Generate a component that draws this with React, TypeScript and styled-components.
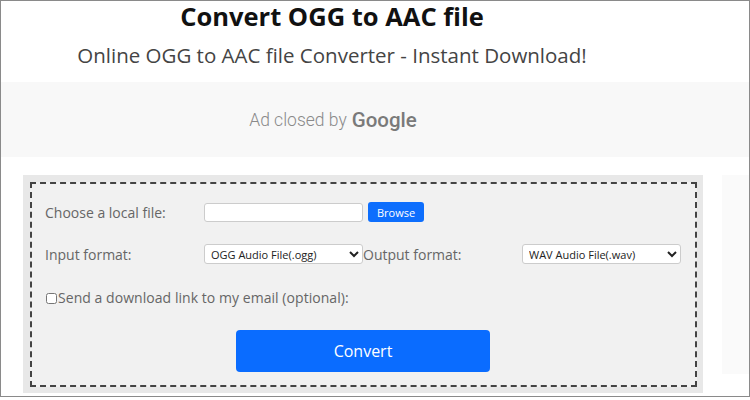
import React from "react";
import styled, { createGlobalStyle } from "styled-components";

const Global = createGlobalStyle`
  html, body { margin: 0; padding: 0; background: #fff; }
  body { font-family: "Open Sans", "Liberation Sans", sans-serif; }
`;

const Frame = styled.div`
  width: 750px;
  height: 397px;
  box-sizing: border-box;
  border: 1px solid #8a8a8a;
  overflow: hidden;
  display: flex;
  flex-direction: column;
`;

const Header = styled.header`
  display: flex;
  flex-direction: column;
  align-items: center;
  padding-right: 86px;
  height: 81px;
`;

const Title = styled.h1`
  margin: 0;
  font-size: 25.5px;
  font-weight: 700;
  color: #111;
  line-height: 31px;
`;

const Subtitle = styled.h2`
  margin: 9px 0 0;
  font-size: 20.5px;
  font-weight: 400;
  color: #444;
  line-height: 28px;
`;

const AdBox = styled.div`
  height: 75px;
  background: #f8f8f8;
  display: flex;
  align-items: center;
  justify-content: center;
  padding-right: 84px;
  font-family: Roboto, "Liberation Sans", sans-serif;
  font-weight: 300;
  color: #8a8a8a;
  font-size: 17.5px;
  gap: 5px;
`;

const GoogleWord = styled.span`
  font-size: 20.5px;
  font-weight: 500;
  color: #7a7a7a;
`;

const Lower = styled.div`
  display: flex;
  padding: 18px 0 0 22px;
  gap: 19px;
`;

const FormOuter = styled.div`
  width: 680px;
  height: 218px;
  box-sizing: border-box;
  background: #e8e8e8;
  padding: 7px 6px 6px 7px;
`;

const Dashed = styled.form`
  height: 100%;
  box-sizing: border-box;
  border: 2px dashed #444;
  background: #f1f1f1;
  padding: 18px 14px 0 13px;
  display: flex;
  flex-direction: column;
`;

const Grid = styled.div`
  display: grid;
  grid-template-columns: repeat(4, 159px);
  grid-auto-rows: 20px;
  row-gap: 22px;
  align-items: center;
`;

const Label = styled.label`
  font-size: 14px;
  color: #666;
  white-space: nowrap;
`;

const FileCell = styled.div`
  grid-column: span 3;
  display: flex;
  align-items: center;
  gap: 5px;
`;

const TextInput = styled.input`
  width: 159px;
  height: 19px;
  box-sizing: border-box;
  border: 1px solid #ccc;
  border-radius: 3px;
  background: #fff;
  padding: 0 4px;
`;

const SmallButton = styled.button`
  height: 20px;
  width: 56px;
  border: none;
  border-radius: 3px;
  background: #0d6efd;
  color: #fff;
  font-family: "Open Sans", sans-serif;
  font-size: 11px;
  padding: 0;
`;

const Select = styled.select`
  width: 159px;
  height: 20px;
  box-sizing: border-box;
  border: 1px solid #ccc;
  border-radius: 3px;
  background: #fff;
  color: #222;
  font-family: "Open Sans", sans-serif;
  font-size: 11px;
  padding: 0 0 0 2px;
`;

const CheckRow = styled.div`
  display: flex;
  align-items: center;
  margin-top: 24px;
  padding-left: 1px;
`;

const Check = styled.input`
  width: 11px;
  height: 11px;
  margin: 1px 1px 0 0;
`;

const CheckLabel = styled.label`
  font-size: 14px;
  color: #666;
  letter-spacing: 0.05px;
`;

const ConvertRow = styled.div`
  display: flex;
  justify-content: center;
  margin-top: 23px;
`;

const ConvertButton = styled.button`
  width: 254px;
  height: 42px;
  border: none;
  border-radius: 4px;
  background: #0a6cff;
  color: #fff;
  font-family: "Open Sans", sans-serif;
  font-size: 16px;
`;

const SidePanel = styled.div`
  width: 27px;
  height: 199px;
  background: #fafafa;
`;

export default function App() {
  return (
    <>
      <Global />
      <Frame>
        <Header>
          <Title>Convert OGG to AAC file</Title>
          <Subtitle>Online OGG to AAC file Converter - Instant Download!</Subtitle>
        </Header>
        <AdBox>
          <span>Ad closed by</span>
          <GoogleWord>Google</GoogleWord>
        </AdBox>
        <Lower>
          <FormOuter>
            <Dashed onSubmit={(e) => e.preventDefault()}>
              <Grid>
                <Label>Choose a local file:</Label>
                <FileCell>
                  <TextInput type="text" />
                  <SmallButton type="button">Browse</SmallButton>
                </FileCell>
                <Label>Input format:</Label>
                <Select defaultValue="ogg">
                  <option value="ogg">OGG Audio File(.ogg)</option>
                </Select>
                <Label>Output format:</Label>
                <Select defaultValue="wav">
                  <option value="wav">WAV Audio File(.wav)</option>
                </Select>
              </Grid>
              <CheckRow>
                <Check type="checkbox" id="mail" />
                <CheckLabel htmlFor="mail">Send a download link to my email (optional):</CheckLabel>
              </CheckRow>
              <ConvertRow>
                <ConvertButton type="submit">Convert</ConvertButton>
              </ConvertRow>
            </Dashed>
          </FormOuter>
          <SidePanel />
        </Lower>
      </Frame>
    </>
  );
}
